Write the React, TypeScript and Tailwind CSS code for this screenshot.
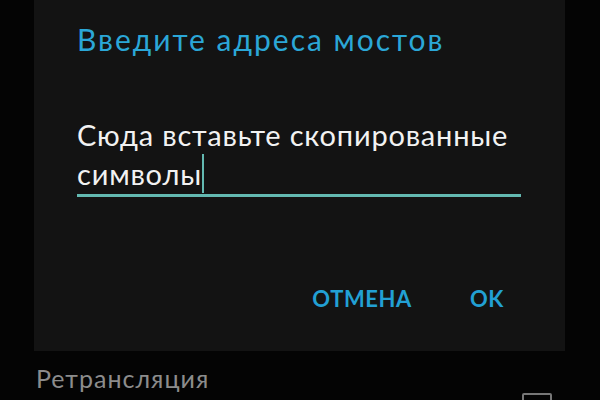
import React from "react";

export default function App() {
  return (
    <div
      className="w-[600px] h-[400px] overflow-hidden bg-[#040404] flex flex-col"
      style={{ fontFamily: "Lato, 'Noto Sans', sans-serif" }}
    >
      <div className="ml-[34px] w-[531px] h-[351px] shrink-0 bg-[#131313] flex flex-col pl-[43px] pr-[44px]">
        <div className="pt-[21px] text-[30px] leading-[36px] tracking-[2px] text-[#2ba7d7]">
          Введите адреса мостов
        </div>
        <div className="mt-[58px] pb-[1px] border-b-[3px] border-[#63b9b1]">
          <div className="text-[29px] leading-[39px] tracking-[0.8px] text-[#f2f2f2]">
            Сюда вставьте скопированные символы
            <span className="inline-block align-top w-[2px] h-[39px] bg-[#63b9b1]" />
          </div>
        </div>
        <div className="mt-[88px] flex justify-end gap-[58px] pr-[17px] text-[22px] leading-[28px] font-bold tracking-[0.6px] text-[#22a0d4]">
          <span>ОТМЕНА</span>
          <span>OK</span>
        </div>
      </div>
      <div className="flex justify-between pl-[36px] pr-[48px]">
        <div className="mt-[12px] text-[25px] leading-[30px] tracking-[1px] text-[#8c8c8c]">
          Ретрансляция
        </div>
        <div className="mt-[42px] w-[30px] h-[30px] shrink-0 border-2 border-[#777777] rounded-[2px]" />
      </div>
    </div>
  );
}
